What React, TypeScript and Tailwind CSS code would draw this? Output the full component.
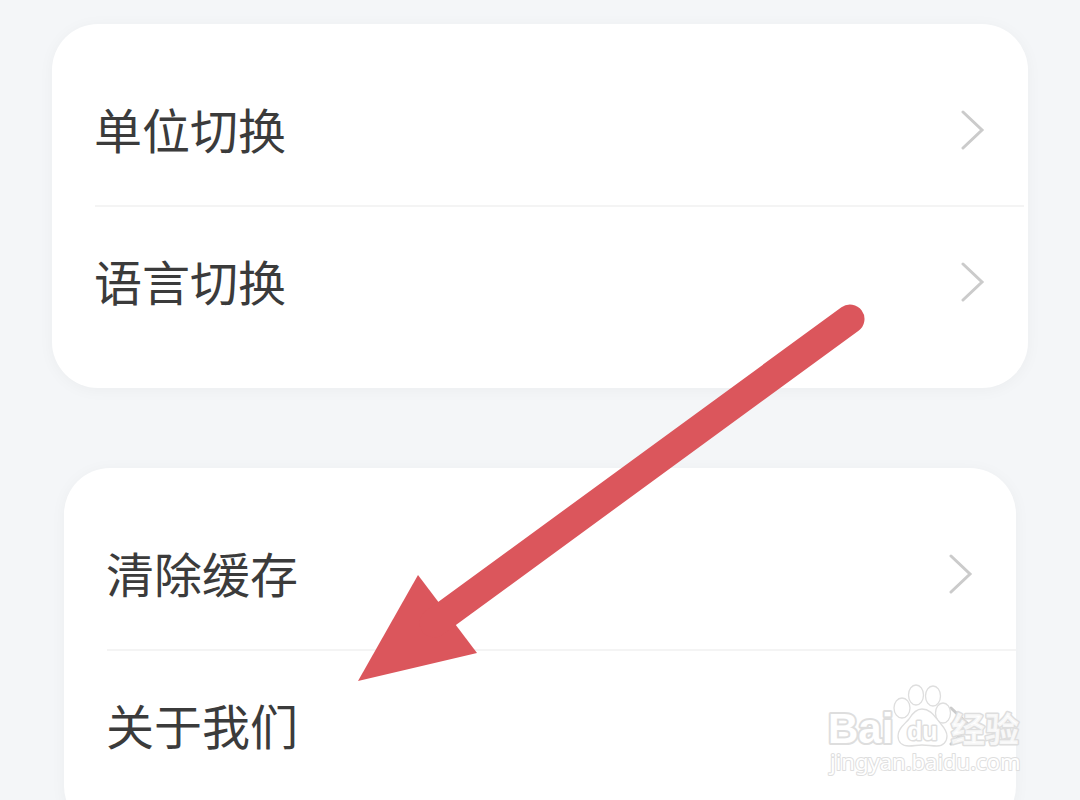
const GROUPS = [
  {
    id: 'preferences',
    className: 'mx-[52px]',
    dividerClassName: 'mr-1',
    items: ['单位切换', '语言切换'],
  },
  {
    id: 'application',
    className: 'mx-16',
    dividerClassName: '',
    items: ['清除缓存', '关于我们'],
  },
];

function Chevron() {
  return (
    <svg
      className="h-10 w-6 shrink-0 text-[#cbcbcb]"
      viewBox="0 0 24 40"
      fill="none"
      stroke="currentColor"
      strokeWidth="3"
      strokeLinecap="round"
      aria-hidden="true"
    >
      <path d="M2 2 21 20 2 38" />
    </svg>
  );
}

function SettingsRow({ label }: { label: string }) {
  return (
    <button
      type="button"
      className="flex h-[150px] w-full items-center justify-between pl-[42px] pr-[43px] text-left"
    >
      <span className="pb-1 text-[48px] leading-[60px] text-[#3b3b3b]">{label}</span>
      <Chevron />
    </button>
  );
}

function PointerArrow() {
  return (
    <svg
      className="pointer-events-none absolute left-[358px] top-[302px] h-[380px] w-[508px] text-[#db565c]"
      viewBox="0 0 508 380"
      aria-hidden="true"
    >
      <path d="M0 379 60 273 119 351Z" fill="currentColor" />
      <path d="M76 321 492 17" stroke="currentColor" strokeWidth="29" strokeLinecap="round" />
    </svg>
  );
}

function Watermark() {
  return (
    <svg
      className="pointer-events-none absolute left-[820px] top-[680px] h-[104px] w-[210px]"
      viewBox="0 0 210 104"
      fill="#ffffff"
      stroke="#dedede"
      strokeLinejoin="round"
      aria-label="Baidu 经验"
    >
      <g
        className="font-['Liberation_Sans','Noto_Sans_CJK_SC',sans-serif] font-bold"
        strokeWidth="4"
        paintOrder="stroke"
      >
        <text x="8" y="63" fontSize="42">Bai</text>
        <text x="131" y="62" fontSize="34" fillOpacity="0.8" strokeWidth="3">经验</text>
      </g>
      <g strokeWidth="1.3" fillOpacity="0.8">
        <ellipse cx="82" cy="28" rx="8" ry="10" />
        <ellipse cx="96" cy="15" rx="7.5" ry="10" />
        <ellipse cx="113" cy="16" rx="7.5" ry="10" />
        <ellipse cx="123" cy="33" rx="7.5" ry="10" />
        <path d="M102 29C96 29 92 34 89 39C85 44 78 48 78 56C78 62 82 66 89 66C94 66 97 65 102 65C107 65 112 66 117 66C123 66 127 62 127 56C127 49 121 45 117 39C113 34 109 29 102 29Z" />
      </g>
      <text
        x="87"
        y="60"
        fontSize="25"
        strokeWidth="3"
        paintOrder="stroke"
        className="font-['Liberation_Sans',sans-serif] font-bold"
      >
        du
      </text>
      <text
        x="10"
        y="90"
        fontSize="22"
        strokeWidth="2"
        paintOrder="stroke"
        className="font-['Noto_Sans',sans-serif]"
      >
        jingyan.baidu.com
      </text>
    </svg>
  );
}

export default function App() {
  return (
    <div className="relative h-screen overflow-hidden bg-[#f4f6f8] font-['Noto_Sans_CJK_SC',sans-serif]">
      <main className="flex flex-col gap-20 pt-6">
        {GROUPS.map((group) => (
          <section
            key={group.id}
            className={`rounded-[46px] bg-white py-[31px] shadow-[0_2px_16px_rgba(0,0,0,0.04)] ${group.className}`}
          >
            <SettingsRow label={group.items[0]} />
            <hr className={`ml-[43px] border-t-2 border-[#f4f4f4] ${group.dividerClassName}`} />
            <SettingsRow label={group.items[1]} />
          </section>
        ))}
      </main>
      <PointerArrow />
      <Watermark />
    </div>
  );
}
